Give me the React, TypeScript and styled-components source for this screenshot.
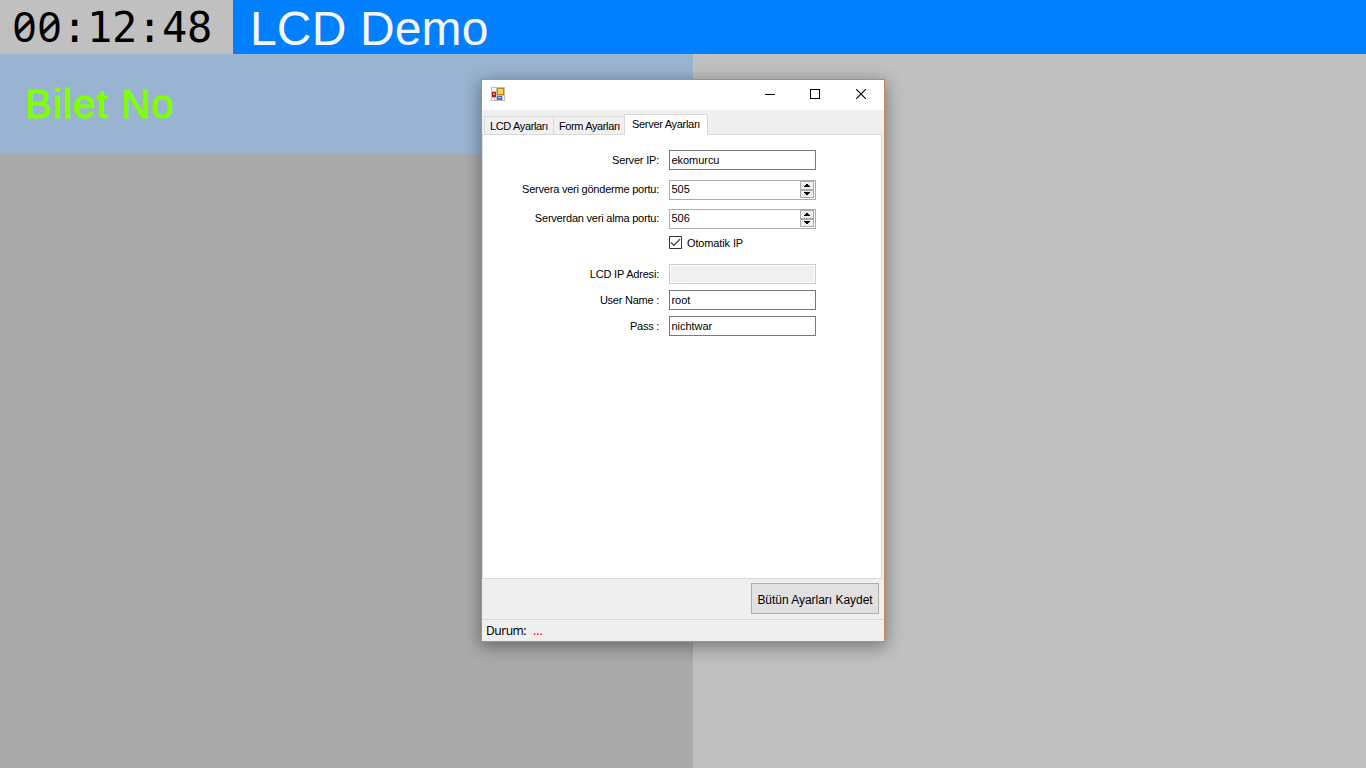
import React from "react";
import styled, { createGlobalStyle } from "styled-components";

const GlobalStyle = createGlobalStyle`
  * { box-sizing: border-box; }
  body { margin: 0; background: #c0c0c0; overflow: hidden; }
`;

const Screen = styled.main`
  position: relative;
  display: flex;
  flex-direction: column;
  width: 1366px;
  height: 768px;
  font-family: "Liberation Sans", Arial, sans-serif;
`;

const Header = styled.header`
  display: flex;
  height: 54px;
  background: #0080ff;
`;

const Clock = styled.div`
  display: flex;
  width: 233px;
  padding-left: 12px;
  background: #c0c0c0;
  color: #000;
`;

const Digit = styled.span<{ $zero: boolean }>`
  width: 25px;
  text-align: center;
  font-family: ${(p) => (p.$zero ? '"Noto Sans"' : '"DejaVu Sans Mono"')}, monospace;
  font-size: 42px;
  font-feature-settings: "zero" 1;
  line-height: ${(p) => (p.$zero ? 51 : 56)}px;
`;

const Title = styled.h1`
  margin: 0 0 0 17px;
  color: #f5f5f5;
  font-size: 48px;
  font-weight: 400;
  letter-spacing: 0.15px;
  line-height: 57px;
  white-space: nowrap;
`;

const Board = styled.div`
  display: flex;
  flex: 1;
`;

const QueueColumn = styled.section`
  width: 693px;
  background: #aaa;
`;

const QueueHeading = styled.div`
  height: 100px;
  padding-left: 25px;
  background: #99b4d1;
  color: #80ff00;
  font-size: 40px;
  letter-spacing: 1.2px;
  line-height: 101px;
  -webkit-text-stroke: 1px #80ff00;
`;

const Dialog = styled.section`
  position: absolute;
  left: 481px;
  top: 79px;
  display: flex;
  flex-direction: column;
  width: 404px;
  height: 563px;
  border: 1px solid #c8865a;
  background: #efefef;
  box-shadow: 0 4px 16px 1px rgba(0, 0, 0, 0.38);
  color: #000;
  font-size: 11px;
`;

const TitleBar = styled.div`
  display: flex;
  align-items: flex-start;
  justify-content: space-between;
  height: 30px;
  padding-left: 9px;
  background: #fff;
`;

const AppIcon = styled.svg`
  margin-top: 7px;
`;

const Controls = styled.div`
  display: flex;
  height: 28px;
`;

const ControlButton = styled.div`
  display: flex;
  align-items: center;
  justify-content: center;
  width: 46px;

  &:first-child {
    width: 44px;
  }
`;

const TabStrip = styled.div`
  display: flex;
  align-items: flex-end;
  height: 24px;
  padding-left: 2px;
`;

const Tab = styled.div<{ $width: number; $active?: boolean }>`
  position: relative;
  z-index: ${(p) => (p.$active ? 1 : 0)};
  width: ${(p) => p.$width}px;
  height: ${(p) => (p.$active ? 21 : 18)}px;
  margin-bottom: ${(p) => (p.$active ? -1 : 0)}px;
  padding-left: ${(p) => (p.$active ? 7 : 5)}px;
  border: 1px solid #d9d9d9;
  border-bottom: 0;
  border-right-width: ${(p) => (p.$active ? 1 : 0)}px;
  background: ${(p) => (p.$active ? "#fff" : "#f0f0f0")};
  line-height: 19px;
  white-space: nowrap;
`;

const Page = styled.div`
  width: 400px;
  height: 445px;
  padding-top: 15px;
  border: 1px solid #d9d9d9;
  background: #fff;
`;

const Row = styled.div<{ $gap: number }>`
  display: flex;
  height: 20px;
  margin-bottom: ${(p) => p.$gap}px;
`;

const Label = styled.label<{ $raised: boolean }>`
  width: 176px;
  margin-right: 10px;
  line-height: ${(p) => (p.$raised ? 19 : 21)}px;
  text-align: right;
  white-space: nowrap;
`;

const Spaced = styled.span<{ $spacing: number }>`
  letter-spacing: ${(p) => p.$spacing}px;
`;

const Field = styled.div<{ $kind?: "spin" | "disabled" }>`
  display: flex;
  justify-content: space-between;
  width: 147px;
  height: 20px;
  padding-left: 1.5px;
  border: 1px solid ${(p) => (p.$kind === "spin" ? "#abadb3" : p.$kind === "disabled" ? "#ccc" : "#7a7a7a")};
  background: ${(p) => (p.$kind === "disabled" ? "#f0f0f0" : "#fff")};
  box-shadow: inset 0 0 0 1px #fff;
  line-height: ${(p) => (p.$kind === "spin" ? 17 : 19)}px;
`;

const CheckRow = styled.div`
  display: flex;
  align-items: center;
  gap: 5px;
  height: 13px;
  margin: -2px 0 15px 186px;
`;

const Footer = styled.div`
  display: flex;
  justify-content: flex-end;
  height: 40px;
  padding: 4px 5px 0 0;
`;

const SaveButton = styled.button`
  width: 128px;
  height: 31px;
  padding: 2px 0 0;
  border: 1px solid #adadad;
  background: #e1e1e1;
  color: #000;
  font-family: inherit;
  font-size: 12px;
  white-space: nowrap;
`;

const StatusBar = styled.div`
  display: flex;
  gap: 7px;
  height: 22px;
  padding-left: 4px;
  border-top: 1px solid #d7d7d7;
  font-family: "Noto Sans", sans-serif;
  font-size: 12px;
  letter-spacing: -0.5px;
  line-height: 22px;
`;

const Alert = styled.span`
  color: #ff0000;
  letter-spacing: 0;
`;

const Spinner = () => (
  <svg width="16" height="18" viewBox="0 0 16 18" shapeRendering="crispEdges">
    <rect x="1.5" y="0.5" width="13" height="8" fill="#f0f0f0" stroke="#acacac" />
    <rect x="1.5" y="9.5" width="13" height="7" fill="#f0f0f0" stroke="#acacac" />
    <path d="M7 3h2v1h1v1h1v1H5V5h1V4h1z" fill="#000" />
    <path d="M5 11h6v1h-1v1H9v1H7v-1H6v-1H5z" fill="#000" />
  </svg>
);

type SettingRowProps = {
  label: string;
  value: string;
  gap: number;
  labelSpacing: number;
  kind?: "spin" | "disabled";
};

const SettingRow = ({ label, value, gap, labelSpacing, kind }: SettingRowProps) => (
  <Row $gap={gap}>
    <Label $raised={kind === "spin"}><Spaced $spacing={labelSpacing}>{label}</Spaced></Label>
    <Field $kind={kind}>
      <Spaced $spacing={-0.05}>{value}</Spaced>
      {kind === "spin" && <Spinner />}
    </Field>
  </Row>
);

export default function App() {
  return (
    <>
      <GlobalStyle />
      <Screen>
        <Header>
          <Clock>
            {"00:12:48".split("").map((char, i) => (
              <Digit key={i} $zero={char === "0"}>{char}</Digit>
            ))}
          </Clock>
          <Title>LCD Demo</Title>
        </Header>
        <Board>
          <QueueColumn>
            <QueueHeading>Bilet No</QueueHeading>
          </QueueColumn>
        </Board>
        <Dialog>
          <TitleBar>
            <AppIcon width="14" height="14" viewBox="0 0 14 14" shapeRendering="crispEdges">
              <path d="M0 0h14v14H0z" fill="#bdbdbd" />
              <path d="M1 1h4v3H1zM1 11h2v2H1zM4 11h1v2H4zM12 9h1v4h-1z" fill="#fff" />
              <path d="M6 1h7v7H6z" fill="#b8860b" />
              <path d="M7 2h5v5H7z" fill="#ffd44a" />
              <path d="M1 5h4v5H1z" fill="#b02020" />
              <path d="M2 6h2v2H2z" fill="#f08070" />
              <path d="M6 9h5v4H6z" fill="#3c74d8" />
              <path d="M7 10h3v1H7z" fill="#9cc4ff" />
            </AppIcon>
            <Controls>
              <ControlButton>
                <svg width="10" height="10" shapeRendering="crispEdges"><path d="M0 5.5h10" stroke="#000" /></svg>
              </ControlButton>
              <ControlButton>
                <svg width="10" height="10" shapeRendering="crispEdges"><path d="M.5.5h9v9h-9z" fill="none" stroke="#000" /></svg>
              </ControlButton>
              <ControlButton>
                <svg width="10" height="10"><path d="M0 0l10 10M10 0L0 10" stroke="#000" strokeWidth="1.1" /></svg>
              </ControlButton>
            </Controls>
          </TitleBar>
          <TabStrip>
            <Tab $width={69}><Spaced $spacing={-0.36}>LCD Ayarları</Spaced></Tab>
            <Tab $width={71}><Spaced $spacing={-0.38}>Form Ayarları</Spaced></Tab>
            <Tab $width={84} $active><Spaced $spacing={-0.3}>Server Ayarları</Spaced></Tab>
          </TabStrip>
          <Page>
            <SettingRow label="Server IP:" value="ekomurcu" gap={10} labelSpacing={-0.2} />
            <SettingRow label="Servera veri gönderme portu:" value="505" gap={9} labelSpacing={-0.22} kind="spin" />
            <SettingRow label="Serverdan veri alma portu:" value="506" gap={9} labelSpacing={-0.21} kind="spin" />
            <CheckRow>
              <svg width="13" height="13" viewBox="0 0 13 13">
                <path d="M.5.5h12v12H.5z" fill="#fff" stroke="#333" />
                <path d="M2 6.5l3 3 6-6.3" fill="none" stroke="#333" strokeWidth="1.2" />
              </svg>
              <Spaced $spacing={-0.13}>Otomatik IP</Spaced>
            </CheckRow>
            <SettingRow label="LCD IP Adresi:" value="" gap={6} labelSpacing={-0.2} kind="disabled" />
            <SettingRow label="User Name :" value="root" gap={6} labelSpacing={-0.24} />
            <SettingRow label="Pass :" value="nichtwar" gap={0} labelSpacing={-0.27} />
          </Page>
          <Footer>
            <SaveButton><Spaced $spacing={-0.03}>Bütün Ayarları Kaydet</Spaced></SaveButton>
          </Footer>
          <StatusBar>
            <span>Durum:</span>
            <Alert>...</Alert>
          </StatusBar>
        </Dialog>
      </Screen>
    </>
  );
}
